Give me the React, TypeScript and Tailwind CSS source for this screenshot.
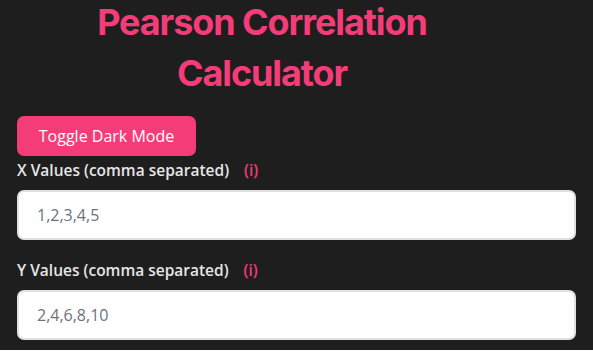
import React from "react";

export default function App() {
  return (
    <div className="min-h-screen w-full bg-[#1e1e1e] px-[17px] pt-0 font-['Open_Sans',sans-serif]">
      <h1 className="-mt-[3px] pr-[69px] text-center font-['Inter',sans-serif] font-bold text-[36px] leading-[51px] tracking-[-1.1px] text-[#f43c78]">
        Pearson Correlation
        <br />
        Calculator
      </h1>
      <button className="mt-[17px] h-[40px] w-[179px] rounded-[7px] bg-[#f43c78] text-[16px] text-white">
        Toggle Dark Mode
      </button>
      <div className="mt-[2px] flex items-center gap-[15px] h-[26px] text-[15.5px] font-semibold text-[#e6e6e6]">
        <span>X Values (comma separated)</span>
        <span className="text-[#f43c78]">(i)</span>
      </div>
      <input
        className="mt-[6px] block h-[50px] w-full rounded-[7px] border-2 border-[#e0e0e0] bg-white px-[18px] text-[16px] text-gray-800 placeholder:text-[#6b7280] outline-none"
        placeholder="1,2,3,4,5"
      />
      <div className="mt-[18px] flex items-center gap-[15px] h-[26px] text-[15.5px] font-semibold text-[#e6e6e6]">
        <span>Y Values (comma separated)</span>
        <span className="text-[#f43c78]">(i)</span>
      </div>
      <input
        className="mt-[6px] block h-[50px] w-full rounded-[7px] border-2 border-[#e0e0e0] bg-white px-[18px] text-[16px] text-gray-800 placeholder:text-[#6b7280] outline-none"
        placeholder="2,4,6,8,10"
      />
    </div>
  );
}
